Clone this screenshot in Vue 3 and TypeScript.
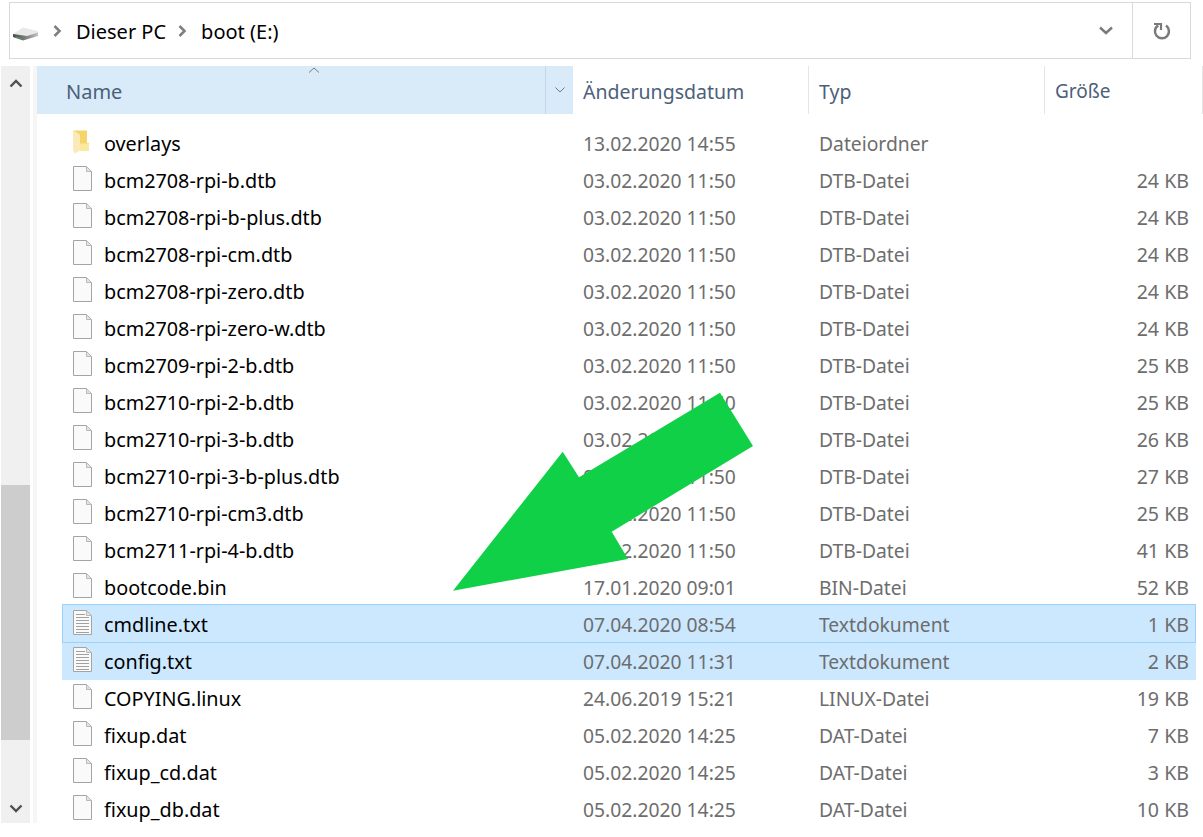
<template>
  <div class="window">
    <div class="address-bar">
      <svg class="drive" width="26" height="14" viewBox="0 0 26 14">
        <defs>
          <linearGradient id="driveFront" x1="0" y1="0" x2="1" y2="0">
            <stop offset="0" stop-color="#4a4a4a" />
            <stop offset="0.6" stop-color="#8a8a8a" />
            <stop offset="1" stop-color="#c4c4c4" />
          </linearGradient>
        </defs>
        <path d="M0 7 L10 0.5 L25 4 L25 8 L5 10 Z" fill="#e9e9e9" />
        <path d="M0 7 L14 9 L25 5.5 L25 9 L10 13.5 L0 10 Z" fill="url(#driveFront)" />
        <path d="M3 9.5 L8 11 L8 12 L3 10.5 Z" fill="#46a657" />
      </svg>
      <svg class="crumb-arrow first" width="9" height="12" viewBox="0 0 9 12">
        <path d="M1.5 1 L6.5 6 L1.5 11" fill="none" stroke="#808080" stroke-width="2.6" />
      </svg>
      <span class="crumb">Dieser PC</span>
      <svg class="crumb-arrow" width="9" height="12" viewBox="0 0 9 12">
        <path d="M1.5 1 L6.5 6 L1.5 11" fill="none" stroke="#808080" stroke-width="2.6" />
      </svg>
      <span class="crumb">boot (E:)</span>
      <span class="spacer"></span>
      <svg class="drop" width="14" height="9" viewBox="0 0 14 9">
        <path d="M1 1.5 L7 7 L13 1.5" fill="none" stroke="#7a7a7a" stroke-width="2.4" />
      </svg>
      <div class="refresh">
        <svg width="18" height="18" viewBox="0 0 18 18">
          <path d="M5.2 3.4 A7 7 0 1 0 13 3.6" fill="none" stroke="#7a7a7a" stroke-width="2.5" />
          <path d="M1 2 H8 V8" fill="none" stroke="#7a7a7a" stroke-width="2.2" />
        </svg>
      </div>
    </div>

    <div class="browser">
      <div class="scrollbar">
        <svg width="14" height="9" viewBox="0 0 14 9">
          <path d="M1.5 7.5 L7 2 L12.5 7.5" fill="none" stroke="#505050" stroke-width="2.4" />
        </svg>
        <div class="thumb"></div>
        <svg class="down" width="14" height="9" viewBox="0 0 14 9">
          <path d="M1.5 1.5 L7 7 L12.5 1.5" fill="none" stroke="#505050" stroke-width="2.4" />
        </svg>
      </div>
      <div class="gutter"></div>

      <div class="list">
        <div class="header">
          <div class="col-name head-name">
            <span>Name</span>
            <svg class="sort" width="12" height="6" viewBox="0 0 12 6">
              <path d="M1 5.5 L6 1 L11 5.5" fill="none" stroke="#7a7a7a" stroke-width="1" />
            </svg>
            <div class="head-drop">
              <svg width="10" height="6" viewBox="0 0 10 6">
                <path d="M0.5 0.5 L5 5 L9.5 0.5" fill="none" stroke="#6d7a86" stroke-width="1" />
              </svg>
            </div>
          </div>
          <div class="col-date">Änderungsdatum</div>
          <div class="col-type">Typ</div>
          <div class="col-size">Größe</div>
        </div>

        <div class="rows">
          <div
            v-for="file in files"
            :key="file.name"
            class="row"
            :class="{ selected: file.selected, focused: file.focused }"
          >
            <div class="col-name cell-name">
              <svg v-if="file.kind === 'folder'" class="icon" width="19" height="25" viewBox="0 0 19 25">
                <path d="M0 1.5 H14 V14 H16 V21.5 H7 V6 Z" fill="#f6d46c" />
                <path d="M7 14.5 H16 V21.5 H7 Z" fill="#fde8a0" />
                <path d="M0 1.5 L7 6 V21.5 L2 24.5 L0 21.5 Z" fill="#fbe9b6" />
              </svg>
              <svg v-else class="icon" width="19" height="25" viewBox="0 0 19 25">
                <path d="M0.5 0.5 H13.5 L18.5 5.5 V24.5 H0.5 Z" fill="#fafafa" stroke="#a4a4a4" />
                <path d="M13.5 0.5 V5.5 H18.5 Z" fill="#e4e4e4" stroke="#b8b8b8" />
                <path
                  v-if="file.kind === 'text'"
                  d="M3 4.5 H12 M3 7.5 H16 M3 10.5 H16 M3 13.5 H16 M3 16.5 H16 M3 19.5 H16 M3 22.5 H16"
                  stroke="#a0a0a0"
                />
              </svg>
              <span class="file-name">{{ file.name }}</span>
            </div>
            <div class="col-date">{{ file.date }}</div>
            <div class="col-type">{{ file.type }}</div>
            <div class="size-value">{{ file.size }}</div>
          </div>
        </div>
      </div>
    </div>

    <svg class="arrow" width="1203" height="837" viewBox="0 0 1203 837">
      <polygon
        points="453,590.7 562.7,451.7 579,477.3 720,392.7 753,446 611.7,531.7 628,559"
        fill="#10d047"
      />
    </svg>
  </div>
</template>

<script setup lang="ts">
type FileKind = 'folder' | 'file' | 'text'

interface FileRow {
  name: string
  date: string
  type: string
  size: string
  kind: FileKind
  selected?: boolean
  focused?: boolean
}

const dtb = (name: string, size: string): FileRow => ({
  name,
  date: '03.02.2020 11:50',
  type: 'DTB-Datei',
  size,
  kind: 'file',
})

const files: FileRow[] = [
  { name: 'overlays', date: '13.02.2020 14:55', type: 'Dateiordner', size: '', kind: 'folder' },
  dtb('bcm2708-rpi-b.dtb', '24 KB'),
  dtb('bcm2708-rpi-b-plus.dtb', '24 KB'),
  dtb('bcm2708-rpi-cm.dtb', '24 KB'),
  dtb('bcm2708-rpi-zero.dtb', '24 KB'),
  dtb('bcm2708-rpi-zero-w.dtb', '24 KB'),
  dtb('bcm2709-rpi-2-b.dtb', '25 KB'),
  dtb('bcm2710-rpi-2-b.dtb', '25 KB'),
  dtb('bcm2710-rpi-3-b.dtb', '26 KB'),
  dtb('bcm2710-rpi-3-b-plus.dtb', '27 KB'),
  dtb('bcm2710-rpi-cm3.dtb', '25 KB'),
  dtb('bcm2711-rpi-4-b.dtb', '41 KB'),
  { name: 'bootcode.bin', date: '17.01.2020 09:01', type: 'BIN-Datei', size: '52 KB', kind: 'file' },
  { name: 'cmdline.txt', date: '07.04.2020 08:54', type: 'Textdokument', size: '1 KB', kind: 'text', selected: true, focused: true },
  { name: 'config.txt', date: '07.04.2020 11:31', type: 'Textdokument', size: '2 KB', kind: 'text', selected: true },
  { name: 'COPYING.linux', date: '24.06.2019 15:21', type: 'LINUX-Datei', size: '19 KB', kind: 'file' },
  { name: 'fixup.dat', date: '05.02.2020 14:25', type: 'DAT-Datei', size: '7 KB', kind: 'file' },
  { name: 'fixup_cd.dat', date: '05.02.2020 14:25', type: 'DAT-Datei', size: '3 KB', kind: 'file' },
  { name: 'fixup_db.dat', date: '05.02.2020 14:25', type: 'DAT-Datei', size: '10 KB', kind: 'file' },
]
</script>

<style>
html,
body {
  margin: 0;
  background: #fff;
  overflow: hidden;
}
</style>

<style scoped>
.window {
  position: relative;
  width: 1203px;
  height: 837px;
  overflow: hidden;
  background: #fff;
  font-family: 'Noto Sans', 'Open Sans', sans-serif;
  font-size: 19.3px;
  color: #000;
}

.address-bar {
  display: flex;
  align-items: center;
  box-sizing: border-box;
  width: 1182px;
  height: 57px;
  margin: 2px 0 7px 9px;
  padding-left: 3px;
  border: 1px solid #d9d9d9;
}

.drive {
  margin-top: 7px;
}

.crumb-arrow {
  margin-left: 12px;
}

.crumb-arrow.first {
  margin-left: 14px;
}

.crumb {
  padding-top: 2px;
  margin-left: 14px;
  font-size: 20px;
}

.spacer {
  flex: 1;
}

.drop {
  margin-right: 19px;
}

.refresh {
  display: flex;
  align-items: center;
  justify-content: center;
  width: 57px;
  height: 100%;
  border-left: 1px solid #d9d9d9;
}

.browser {
  display: flex;
  height: 757px;
  margin-left: 1px;
}

.scrollbar {
  position: relative;
  display: flex;
  flex-direction: column;
  align-items: center;
  flex: none;
  width: 29px;
  padding-top: 13px;
  box-sizing: border-box;
  background: #f0f0f0;
}

.thumb {
  position: absolute;
  top: 419px;
  left: 0;
  width: 29px;
  height: 255px;
  background: #cdcdcd;
}

.scrollbar .down {
  position: absolute;
  bottom: 10px;
}

.gutter {
  flex: none;
  width: 7px;
  border-left: 3px solid #fff;
  box-sizing: border-box;
  background: #f6f6f6;
}

.list {
  flex: 1;
  min-width: 0;
}

.header {
  display: flex;
  height: 48px;
  align-items: stretch;
  color: #4c607a;
  font-size: 19.5px;
}

.header > div {
  display: flex;
  align-items: center;
  padding-top: 2px;
}

.col-name {
  flex: none;
  width: 536px;
  box-sizing: border-box;
}

.col-date {
  flex: none;
  width: 236px;
  box-sizing: border-box;
  padding-left: 10px;
}

.col-type {
  flex: none;
  width: 236px;
  box-sizing: border-box;
  padding-left: 10px;
}

.col-size {
  flex: none;
  width: 158px;
  box-sizing: border-box;
  padding-left: 10px;
  font-size: 19px;
}

.head-name {
  position: relative;
  padding-left: 29px;
  background: #d9ebf9;
  font-size: 20px;
}

.sort {
  position: absolute;
  top: 1px;
  left: 271px;
}

.head-drop {
  position: absolute;
  top: 0;
  right: 0;
  bottom: 0;
  display: flex;
  align-items: center;
  justify-content: center;
  width: 27px;
  border-left: 1px solid #c0d8ec;
}

.header .col-date,
.header .col-type,
.header .col-size {
  border-right: 1px solid #e5e5e5;
}

.rows {
  padding: 11px 0 0 25px;
}

.row {
  display: flex;
  align-items: center;
  box-sizing: border-box;
  width: 1134px;
  height: 37px;
  color: #6d6d6d;
}

.row.selected {
  background: #cce8ff;
}

.row.focused {
  height: 39px;
  margin-top: -2px;
  padding-top: 2px;
  box-shadow: inset 0 0 0 1px #99d1ff;
}

.row .col-name {
  width: 511px;
}

.cell-name {
  display: flex;
  align-items: center;
  padding-left: 11px;
}

.icon {
  flex: none;
  margin-bottom: 5px;
}

.file-name {
  margin-left: 12px;
  color: #000;
  font-size: 19.8px;
}

.size-value {
  flex: 1;
  padding-right: 7px;
  text-align: right;
  font-size: 19.6px;
}

.arrow {
  position: absolute;
  top: 0;
  left: 0;
  pointer-events: none;
}
</style>
